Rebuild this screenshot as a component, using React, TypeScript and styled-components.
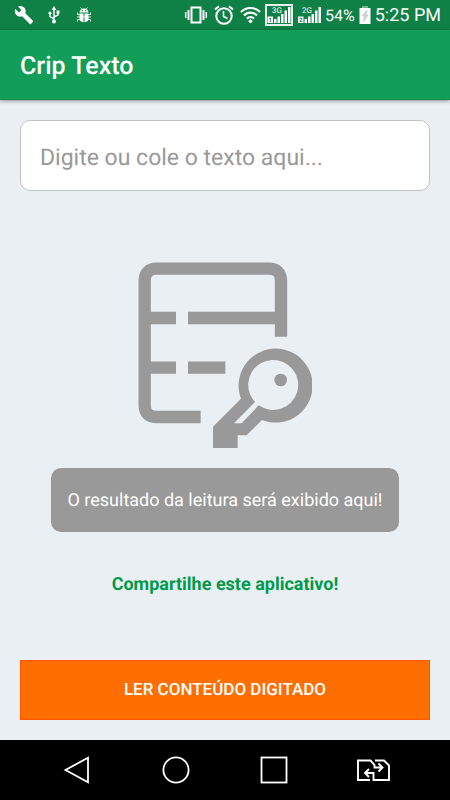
import React from 'react';
import styled, { createGlobalStyle } from 'styled-components';

const GlobalStyle = createGlobalStyle`
  *, *::before, *::after { box-sizing: border-box; }
  body { margin: 0; background: #e9eff3; font-family: Roboto, sans-serif; text-rendering: geometricPrecision; }
  button, input { font-family: inherit; text-rendering: inherit; }
  svg { display: block; flex: none; }
`;

const Screen = styled.div`
  min-height: 100vh;
  display: flex;
  flex-direction: column;
  background: #e9eff3;
`;

const StatusBar = styled.div`
  height: 30px;
  padding: 0 9px 0 14px;
  display: flex;
  align-items: center;
  justify-content: space-between;
  background: #0f8046;
  color: #fff;
`;

const StatusGroup = styled.div<{ $gap: number }>`
  display: flex;
  align-items: center;
  gap: ${(p) => p.$gap}px;
`;

const StatusText = styled.span<{ $size: number }>`
  padding-top: 2px;
  font-size: ${(p) => p.$size}px;
  line-height: 28px;
  white-space: nowrap;
`;

const AppBar = styled.header`
  height: 70px;
  padding: 4px 20px 0;
  display: flex;
  align-items: center;
  background: #129e58;
  border-bottom: 1px solid #0c8a4a;
  box-shadow: 0 1px 4px rgba(0, 0, 0, 0.4);
`;

const Title = styled.h1`
  margin: 0;
  color: #fff;
  font-size: 25px;
  line-height: 32px;
  font-weight: 500;
`;

const Content = styled.main`
  flex: 1;
  display: flex;
  flex-direction: column;
  padding: 20px;
`;

const TextField = styled.input`
  width: 100%;
  height: 71px;
  padding: 4px 19px 0;
  border: 1px solid #bfc3c6;
  border-radius: 10px;
  background: #fff;
  color: #333;
  font-size: 23px;
  outline: none;
  &::placeholder { color: #999; opacity: 1; }
`;

const Result = styled.section`
  flex: 1;
  display: flex;
  flex-direction: column;
  align-items: center;
  justify-content: center;
  padding-top: 8px;
`;

const Illustration = styled.svg`
  width: 174px;
  height: 186px;
`;

const Message = styled.p`
  margin: 20px 0 0;
  padding: 21px 16px 19px;
  border-radius: 10px;
  background: #999;
  color: #fff;
  font-size: 18px;
  line-height: 24px;
  text-align: center;
`;

const ShareLink = styled.a`
  margin-top: 40px;
  color: #009a4a;
  font-size: 18px;
  line-height: 26px;
  font-weight: 700;
  text-decoration: none;
`;

const ReadButton = styled.button`
  width: 100%;
  height: 60px;
  border: 1px solid #ff5500;
  background: #ff6e00;
  color: #fff;
  font-size: 17px;
  font-weight: 500;
  text-transform: uppercase;
  cursor: pointer;
`;

const NavBar = styled.nav`
  height: 60px;
  padding: 0 28px;
  display: grid;
  grid-template-columns: repeat(4, 1fr);
  background: #000;
`;

const NavButton = styled.button`
  display: flex;
  align-items: center;
  justify-content: center;
  padding: 0;
  border: 0;
  background: none;
  color: #fff;
  cursor: pointer;
`;

const WrenchIcon = () => (
  <svg width="20" height="20" viewBox="0 0 24 24" fill="currentColor" aria-hidden="true">
    <path d="M22.7 19l-9.1-9.1c.9-2.3.4-5-1.5-6.9-2-2-5-2.4-7.4-1.3L9 6 6 9 1.600 4.700C.4 7.100.9 10.100 2.900 12.100c1.900 1.900 4.600 2.400 6.900 1.500l9.100 9.100c.4.4 1 .4 1.400 0l2.300-2.300c.5-.4.5-1.100.1-1.400z" />
  </svg>
);

const UsbIcon = () => (
  <svg width="12" height="18" viewBox="0 0 12 18" fill="none" stroke="#fff" strokeWidth="1.400" aria-hidden="true">
    <path d="M6 3v11M6 13L2 10.500V7M6 11l4-2V5.500" />
    <path d="M6 0l2.400 4H3.600z" fill="#fff" stroke="none" />
    <circle cx="6" cy="15.500" r="2" fill="#fff" stroke="none" />
    <circle cx="2" cy="7" r="1.600" fill="#fff" stroke="none" />
    <path d="M8.500 4.500h3v3h-3z" fill="#fff" stroke="none" />
  </svg>
);

const BugIcon = () => (
  <svg width="20" height="16" viewBox="0 0 20 16" fill="#fff" aria-hidden="true">
    <path d="M5.500 5.500a4.500 4 0 0 1 9 0z" />
    <path d="M5.500 6.500h4v8.700C6.500 15 5.500 13.500 5.500 11.500zM10.500 6.500h4v5c0 2-1 3.500-4 3.700z" />
    <path d="M6.500 .5l2 2M13.500 .5l-2 2M3.500 5.500v2H6M16.500 5.500v2H14M3 10h14M3.500 14.500v-2H6M16.500 14.500v-2H14" fill="none" stroke="#fff" strokeWidth=".9" />
    <circle cx="8.300" cy="3.700" r=".7" fill="#0f8046" />
    <circle cx="11.700" cy="3.700" r=".7" fill="#0f8046" />
  </svg>
);

const VibrateIcon = () => (
  <svg width="26" height="20" viewBox="0 0 26 20" fill="none" stroke="#fff" strokeWidth="2" aria-hidden="true">
    <rect x="8.500" y="2.500" width="9" height="15" />
    <path d="M5.500 5v10M20.500 5v10" />
    <path d="M2.700 7v6M23.300 7v6" strokeWidth="1.500" />
  </svg>
);

const AlarmIcon = () => (
  <svg width="22" height="22" viewBox="0 0 22 22" fill="none" stroke="#fff" strokeWidth="2" aria-hidden="true">
    <circle cx="11" cy="12" r="7.700" />
    <path d="M2 5.500l4-3.300M20 5.500l-4-3.300" />
    <path d="M10.500 7v5.500l4 2" strokeWidth="1.600" />
  </svg>
);

const WifiIcon = () => (
  <svg width="22" height="20" viewBox="0 0 22 20" fill="none" stroke="#fff" strokeWidth="2.200" aria-hidden="true">
    <path d="M2 7a13.300 13.300 0 0 1 19 0" />
    <path d="M5 10.500a9 9 0 0 1 13 0" />
    <path d="M8 13.600a5 5 0 0 1 7 0" />
    <path d="M11.500 14l2.300 2.200-2.300 2.300-2.300-2.300z" fill="#fff" stroke="none" />
  </svg>
);

const Bars = ({ sim }: { sim: string }) => (
  <>
    <path
      fill="#fff"
      d="M6.500 15h2.500v4H6.500zM10 12.500h2.500V19H10zM13.500 10H16v9h-2.500zM17 6.500h2.500V19H17zM20.500 3H23v16h-2.500z"
    />
    <path fill="#fff" d="M0 12.500h5.500V19H0z" />
    <text x="2.700" y="18" fill="#0f8046" fontSize="6" fontWeight="700" textAnchor="middle">{sim}</text>
  </>
);

const Signal3G = () => (
  <svg width="28" height="22" viewBox="0 0 28 22" role="img" aria-label="3G">
    <rect x="1" y="1" width="26" height="20" fill="none" stroke="#e3f1e9" strokeWidth="2" />
    <g transform="translate(2.500 0)"><Bars sim="1" /></g>
    <text x="7" y="9" fill="#fff" fontSize="8">3G</text>
  </svg>
);

const Signal2G = () => (
  <svg width="24" height="22" viewBox="0 0 24 22" role="img" aria-label="2G">
    <g transform="translate(1 0)"><Bars sim="2" /></g>
    <text x="5" y="9" fill="#fff" fontSize="8">2G</text>
  </svg>
);

const BatteryIcon = () => (
  <svg width="12" height="18" viewBox="0 0 12 18" aria-hidden="true">
    <path d="M3 0h6v2H3z" fill="#6fb58d" />
    <path d="M.5 2h11v16H.5z" fill="#fff" />
    <path d="M8 4.500L3.500 10h2.800L4.500 15 9 9H6z" fill="#eee" stroke="#aaa" strokeWidth=".7" />
  </svg>
);

const TableKeyIcon = () => (
  <Illustration viewBox="27 36 522 558" fill="#999" aria-hidden="true">
    <g fill="none" stroke="#999" strokeWidth="37">
      <path d="M456 260V93q0-37-37-37H84q-37 0-37 37v372q0 36 37 36h131" />
      <path d="M47 204h94M177 204h279M47 353h94M177 353h112" />
    </g>
    <path
      fillRule="evenodd"
      d="M252 530L336 446A111 111 0 1 1 399 510L353 556H326V595H252ZM315 520H338L389 466A75 75 0 1 0 363 433Q367 443 378 456Z"
    />
    <circle cx="455" cy="390" r="19" />
  </Illustration>
);

const BackIcon = () => (
  <svg width="28" height="28" viewBox="0 0 28 28" fill="none" stroke="#fff" strokeWidth="1.800" aria-hidden="true">
    <path d="M25 1.700v24.600L2.500 14z" />
  </svg>
);

const HomeIcon = () => (
  <svg width="28" height="28" viewBox="0 0 28 28" fill="none" stroke="#fff" strokeWidth="1.800" aria-hidden="true">
    <circle cx="14" cy="14" r="12.600" />
  </svg>
);

const RecentsIcon = () => (
  <svg width="28" height="28" viewBox="0 0 28 28" fill="none" stroke="#fff" strokeWidth="1.800" aria-hidden="true">
    <rect x="1.500" y="1.500" width="25" height="25" />
  </svg>
);

const SwitchIcon = () => (
  <svg width="34" height="22" viewBox="0 0 34 22" fill="none" stroke="#fff" strokeWidth="1.900" aria-hidden="true">
    <path d="M14 21H2V1.500h12.500l4 4.500v2.500H26M22.500 4.500l4 4-4 4" />
    <path d="M19 1.500h9l5 5V21H17.500v-7H9.500M13 10l-4 4 4 4" />
  </svg>
);

const navItems = [
  { label: 'Voltar', Icon: BackIcon },
  { label: 'Início', Icon: HomeIcon },
  { label: 'Recentes', Icon: RecentsIcon },
  { label: 'Alternar SIM', Icon: SwitchIcon },
];

export default function App() {
  return (
    <Screen>
      <GlobalStyle />
      <StatusBar>
        <StatusGroup $gap={14}>
          <WrenchIcon />
          <UsbIcon />
          <BugIcon />
        </StatusGroup>
        <StatusGroup $gap={4}>
          <VibrateIcon />
          <AlarmIcon />
          <WifiIcon />
          <Signal3G />
          <Signal2G />
          <StatusText $size={16}>54%</StatusText>
          <BatteryIcon />
          <StatusText $size={18}>5:25 PM</StatusText>
        </StatusGroup>
      </StatusBar>
      <AppBar>
        <Title>Crip Texto</Title>
      </AppBar>
      <Content>
        <TextField type="text" aria-label="Texto" placeholder="Digite ou cole o texto aqui..." />
        <Result>
          <TableKeyIcon />
          <Message>O resultado da leitura será exibido aqui!</Message>
          <ShareLink href="#compartilhar">Compartilhe este aplicativo!</ShareLink>
        </Result>
        <ReadButton type="button">Ler conteúdo digitado</ReadButton>
      </Content>
      <NavBar>
        {navItems.map(({ label, Icon }) => (
          <NavButton key={label} type="button" aria-label={label}>
            <Icon />
          </NavButton>
        ))}
      </NavBar>
    </Screen>
  );
}
